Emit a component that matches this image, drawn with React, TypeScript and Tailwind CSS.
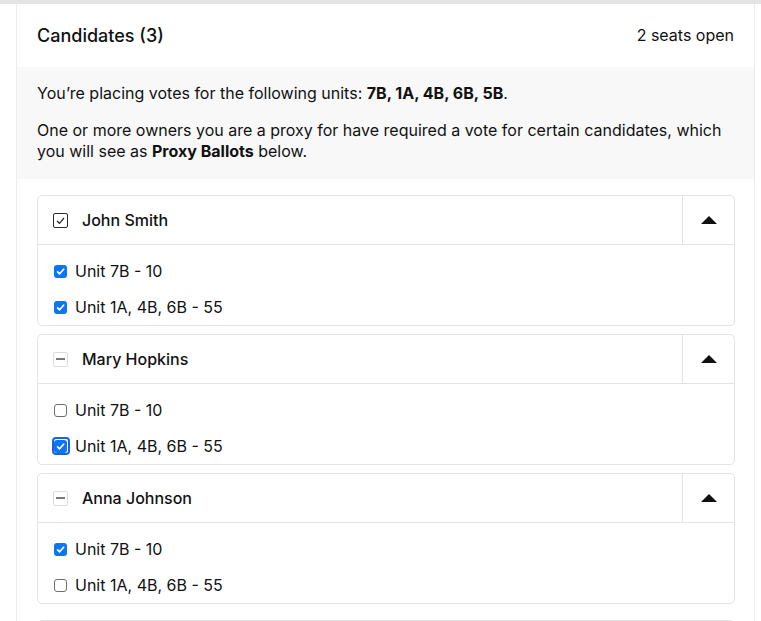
import { useState } from "react";

type Unit = { label: string; checked: boolean; focused?: boolean };
type Candidate = { name: string; state: "all" | "some"; units: Unit[] };

const CANDIDATES: Candidate[] = [
  {
    name: "John Smith",
    state: "all",
    units: [
      { label: "Unit 7B - 10", checked: true },
      { label: "Unit 1A, 4B, 6B - 55", checked: true },
    ],
  },
  {
    name: "Mary Hopkins",
    state: "some",
    units: [
      { label: "Unit 7B - 10", checked: false },
      { label: "Unit 1A, 4B, 6B - 55", checked: true, focused: true },
    ],
  },
  {
    name: "Anna Johnson",
    state: "some",
    units: [
      { label: "Unit 7B - 10", checked: true },
      { label: "Unit 1A, 4B, 6B - 55", checked: false },
    ],
  },
];

function HeaderBox({ state }: { state: "all" | "some" }) {
  if (state === "all") {
    return (
      <span className="w-[15px] h-[15px] border border-[#2a2a2a] rounded-[2px] bg-white flex items-center justify-center">
        <svg width="11" height="11" viewBox="0 0 11 11">
          <path d="M2 6 L4.5 8.3 L9 3" fill="none" stroke="#2a2a2a" strokeWidth="1.2" />
        </svg>
      </span>
    );
  }
  return (
    <span className="w-[15px] h-[15px] border border-[#dcdcdc] rounded-[2px] bg-white flex items-center justify-center">
      <span className="w-[9px] h-[2px] bg-[#7a7a7a]" />
    </span>
  );
}

function UnitBox({ checked, focused }: { checked: boolean; focused?: boolean }) {
  const box = checked ? (
    <span className="w-[13px] h-[13px] rounded-[3px] bg-[#0b75f5] flex items-center justify-center">
      <svg width="9" height="9" viewBox="0 0 9 9">
        <path d="M1.6 4.8 L3.6 6.8 L7.6 2.2" fill="none" stroke="white" strokeWidth="1.7" strokeLinecap="round" strokeLinejoin="round" />
      </svg>
    </span>
  ) : (
    <span className="w-[13px] h-[13px] rounded-[3px] border border-[#6e6e6e] bg-white" />
  );
  if (focused) {
    return (
      <span className="w-[18px] h-[18px] -mx-[2.5px] rounded-[4px] border-2 border-[#1a64d8] flex items-center justify-center">
        {box}
      </span>
    );
  }
  return box;
}

function CandidateCard({ c }: { c: Candidate }) {
  const [open] = useState(true);
  return (
    <div className="border border-[#e3e3e3] rounded-[5px] bg-white">
      <div className="flex h-[49px] border-b border-[#e3e3e3]">
        <div className="flex-1 flex items-center gap-[14px] pl-[15px]">
          <HeaderBox state={c.state} />
          <span className="text-[16px] font-medium text-[#111]">{c.name}</span>
        </div>
        <div className="w-[52px] border-l border-[#e3e3e3] flex items-center justify-center">
          <svg width="16" height="8" viewBox="0 0 16 8" className={open ? "" : "rotate-180"}>
            <path d="M0 8 L8 0 L16 8 Z" fill="#111" />
          </svg>
        </div>
      </div>
      <div className="flex flex-col gap-[18px] pt-[17px] pb-[9px] pl-[16px]">
        {c.units.map((u) => (
          <label key={u.label} className="flex items-center gap-[8px] h-[18px] text-[16px] text-[#111]">
            <UnitBox checked={u.checked} focused={u.focused} />
            <span>{u.label}</span>
          </label>
        ))}
      </div>
    </div>
  );
}

export default function App() {
  return (
    <div
      className="min-h-screen bg-white border-t-4 border-[#e4e4e4]"
      style={{ fontFamily: "Inter, 'Noto Sans', sans-serif" }}
    >
      <div className="ml-[16px] mr-[6px] border-x border-[#ececec] min-h-[617px]">
        <div className="flex items-center justify-between h-[63px] pb-[1px] pl-[20px] pr-[20px]">
          <span className="text-[18px] font-medium text-[#111]">Candidates (3)</span>
          <span className="text-[16px] text-[#111]">2 seats open</span>
        </div>
        <div className="bg-[#f8f8f8] px-[20px] pt-[16px] pb-[17px] text-[16px] leading-[21px] text-[#111]">
          <p>
            You’re placing votes for the following units: <b>7B, 1A, 4B, 6B, 5B</b>.
          </p>
          <p className="mt-[16px]">
            One or more owners you are a proxy for have required a vote for certain candidates, which
            you will see as <b>Proxy Ballots</b> below.
          </p>
        </div>
        <div className="pl-[20px] pr-[19px] pt-[16px] flex flex-col gap-[8px]">
          {CANDIDATES.map((c) => (
            <CandidateCard key={c.name} c={c} />
          ))}
          <div className="mt-[8px] border border-[#e3e3e3] rounded-[5px] h-[60px]" />
        </div>
      </div>
    </div>
  );
}
